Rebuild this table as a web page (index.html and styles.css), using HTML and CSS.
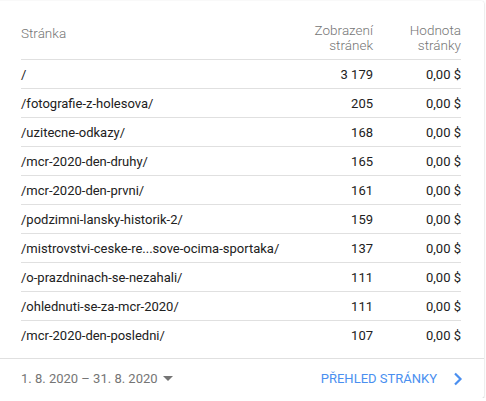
FILE: index.html
```html
<!DOCTYPE html>
<html lang="cs">
<head>
<meta charset="utf-8">
<link rel="stylesheet" href="styles.css">
</head>
<body>
<div class="card">
  <table class="tbl">
    <thead>
      <tr>
        <th class="c-page">Stránka</th>
        <th class="c-num">Zobrazení<br>stránek</th>
        <th class="c-val">Hodnota<br>stránky</th>
      </tr>
    </thead>
    <tbody>
      <tr><td class="c-page">/</td><td class="c-num">3 179</td><td class="c-val">0,00 $</td></tr>
      <tr><td class="c-page">/fotografie-z-holesova/</td><td class="c-num">205</td><td class="c-val">0,00 $</td></tr>
      <tr><td class="c-page">/uzitecne-odkazy/</td><td class="c-num">168</td><td class="c-val">0,00 $</td></tr>
      <tr><td class="c-page">/mcr-2020-den-druhy/</td><td class="c-num">165</td><td class="c-val">0,00 $</td></tr>
      <tr><td class="c-page">/mcr-2020-den-prvni/</td><td class="c-num">161</td><td class="c-val">0,00 $</td></tr>
      <tr><td class="c-page">/podzimni-lansky-historik-2/</td><td class="c-num">159</td><td class="c-val">0,00 $</td></tr>
      <tr><td class="c-page">/mistrovstvi-ceske-re...sove-ocima-sportaka/</td><td class="c-num">137</td><td class="c-val">0,00 $</td></tr>
      <tr><td class="c-page">/o-prazdninach-se-nezahali/</td><td class="c-num">111</td><td class="c-val">0,00 $</td></tr>
      <tr><td class="c-page">/ohlednuti-se-za-mcr-2020/</td><td class="c-num">111</td><td class="c-val">0,00 $</td></tr>
      <tr><td class="c-page">/mcr-2020-den-posledni/</td><td class="c-num">107</td><td class="c-val">0,00 $</td></tr>
    </tbody>
  </table>
  <div class="footer">
    <div class="range">1. 8. 2020 – 31. 8. 2020 <span class="caret"></span></div>
    <div class="link">PŘEHLED STRÁNKY
      <svg class="chev" width="10" height="14" viewBox="0 0 10 14"><path d="M2 1.5 L7.5 7 L2 12.5" fill="none" stroke="#4a8ff0" stroke-width="2.2"/></svg>
    </div>
  </div>
</div>
</body>
</html>
```
FILE: styles.css
```css
html, body {
  margin: 0;
  padding: 0;
  background: #fff;
}
body {
  font-family: Roboto, "Liberation Sans", sans-serif;
  font-size: 13px;
  color: #212121;
  padding-top: 1px;
}
.card {
  width: 487px;
  margin-left: -3px;
  height: 397px;
  box-sizing: border-box;
  background: #fff;
  border-radius: 2px;
  box-shadow: 0 1px 2px rgba(0,0,0,0.22), 0 0 1px rgba(0,0,0,0.12);
  display: flex;
  flex-direction: column;
}
.tbl {
  margin: 21px 23px 0 24px;
  width: 440px;
  border-collapse: collapse;
  table-layout: fixed;
}
.tbl th {
  font-weight: 300;
  color: #757575;
  font-size: 13.5px;
  line-height: 15px;
  padding: 1px 0 6px;
  vertical-align: top;
  border-bottom: 1px solid #e0e0e0;
}
.tbl th.c-page {
  text-align: left;
  padding-top: 4px;
}
.tbl td {
  height: 28px;
  padding: 0;
  border-bottom: 1px solid #e0e0e0;
  line-height: 15px;
  vertical-align: middle;
  white-space: nowrap;
}
.tbl tbody tr:last-child td {
  border-bottom: none;
}
.c-page { text-align: left; }
.c-num { text-align: right; width: 110px; }
.c-val { text-align: right; width: 88px; }
.footer {
  margin-top: auto;
  border-top: 1px solid #e0e0e0;
  height: 39px;
  display: flex;
  align-items: center;
  justify-content: space-between;
  padding: 0 21px 0 24px;
}
.range {
  color: #757575;
  font-size: 13px;
  display: flex;
  align-items: center;
}
.caret {
  display: inline-block;
  width: 0;
  height: 0;
  margin-left: 5px;
  border-left: 5px solid transparent;
  border-right: 5px solid transparent;
  border-top: 5px solid #757575;
}
.link {
  color: #4a8ff0;
  font-size: 13px;
  display: flex;
  align-items: center;
  gap: 16px;
}
.chev { display: block; }
```
